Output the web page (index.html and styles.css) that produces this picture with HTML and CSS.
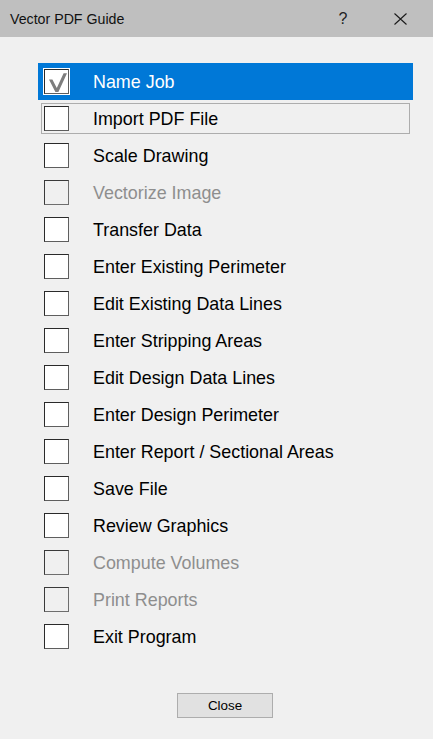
FILE: index.html
```html
<!DOCTYPE html>
<html>
<head>
<meta charset="utf-8">
<title>Vector PDF Guide</title>
<link rel="stylesheet" href="styles.css">
</head>
<body>
<div class="window">
  <div class="titlebar">
    <span class="title">Vector PDF Guide</span>
    <span class="help">?</span>
    <span class="close-x">
      <svg width="13" height="12" viewBox="0 0 13 12"><path d="M0.5 0.5 L12.5 11.5 M12.5 0.5 L0.5 11.5" stroke="#1a1a1a" stroke-width="1.1" fill="none"/></svg>
    </span>
  </div>
  <div class="content">
    <ul class="steps">
      <li class="step selected"><span class="box checked"><svg width="23" height="23" viewBox="0 0 23 23"><path d="M4 9.5 L7.4 9.5 L11.8 18 L18.6 3.2 L22 3.2 L13.4 22 L10.4 22 Z" fill="#7d7d7d"/></svg></span><span class="label">Name Job</span></li>
      <li class="step focused"><span class="box"></span><span class="label">Import PDF File</span></li>
      <li class="step"><span class="box"></span><span class="label">Scale Drawing</span></li>
      <li class="step disabled"><span class="box"></span><span class="label">Vectorize Image</span></li>
      <li class="step"><span class="box"></span><span class="label">Transfer Data</span></li>
      <li class="step"><span class="box"></span><span class="label">Enter Existing Perimeter</span></li>
      <li class="step"><span class="box"></span><span class="label">Edit Existing Data Lines</span></li>
      <li class="step"><span class="box"></span><span class="label">Enter Stripping Areas</span></li>
      <li class="step"><span class="box"></span><span class="label">Edit Design Data Lines</span></li>
      <li class="step"><span class="box"></span><span class="label">Enter Design Perimeter</span></li>
      <li class="step"><span class="box"></span><span class="label">Enter Report / Sectional Areas</span></li>
      <li class="step"><span class="box"></span><span class="label">Save File</span></li>
      <li class="step"><span class="box"></span><span class="label">Review Graphics</span></li>
      <li class="step disabled"><span class="box"></span><span class="label">Compute Volumes</span></li>
      <li class="step disabled"><span class="box"></span><span class="label">Print Reports</span></li>
      <li class="step"><span class="box"></span><span class="label">Exit Program</span></li>
    </ul>
    <div class="actions">
      <button class="btn">Close</button>
    </div>
  </div>
</div>
</body>
</html>
```

FILE: styles.css
```css
html, body {
  margin: 0;
  padding: 0;
  background: #f0f0f0;
}

.window {
  width: 433px;
  height: 739px;
  background: #f0f0f0;
  font-family: "Liberation Sans", Arial, sans-serif;
  overflow: hidden;
}

.titlebar {
  height: 37px;
  background: #bfbfbf;
  display: flex;
  align-items: center;
  padding: 0 26px 0 10px;
  box-sizing: border-box;
}

.title {
  font-size: 14.2px;
  color: #111;
  flex: 1;
  margin-top: 1px;
}

.help {
  width: 14px;
  text-align: center;
  font-size: 16px;
  color: #222;
  margin-top: 1px;
}

.close-x {
  margin-left: 44px;
  display: flex;
  width: 13px;
  height: 12px;
  margin-top: 1px;
}

.content {
  padding-top: 26px;
}

.steps {
  list-style: none;
  margin: 0 0 0 38px;
  padding: 0;
  width: 375px;
}

.step {
  height: 37px;
  display: flex;
  align-items: center;
  padding-left: 6px;
  box-sizing: border-box;
  font-size: 17.9px;
  color: #000;
}

.step.selected {
  background: #0078d7;
  color: #fff;
}

.step.focused {
  outline: 1px solid #adadad;
  outline-offset: -4px;
}

.step.disabled {
  color: #8e8e8e;
}

.box {
  width: 25px;
  height: 25px;
  box-sizing: border-box;
  background: #fff;
  border: 1px solid;
  border-color: #2a2a2a #5e5e5e #5e5e5e #2a2a2a;
  flex: none;
  display: flex;
  align-items: center;
  justify-content: center;
}

.box.checked {
  box-shadow: 0 0 0 1px #ffffff;
}

.step.disabled .box {
  background: #f0f0f0;
  border-color: #3a3a3a #6e6e6e #6e6e6e #3a3a3a;
}

.label {
  margin-left: 24px;
  margin-top: 1px;
  white-space: nowrap;
}

.actions {
  padding-top: 38px;
  padding-left: 177px;
}

.btn {
  width: 96px;
  height: 25px;
  background: #e1e1e1;
  border: 1px solid #adadad;
  font-family: "Liberation Sans", Arial, sans-serif;
  font-size: 13.4px;
  color: #000;
  padding: 0;
  margin: 0;
}
```
